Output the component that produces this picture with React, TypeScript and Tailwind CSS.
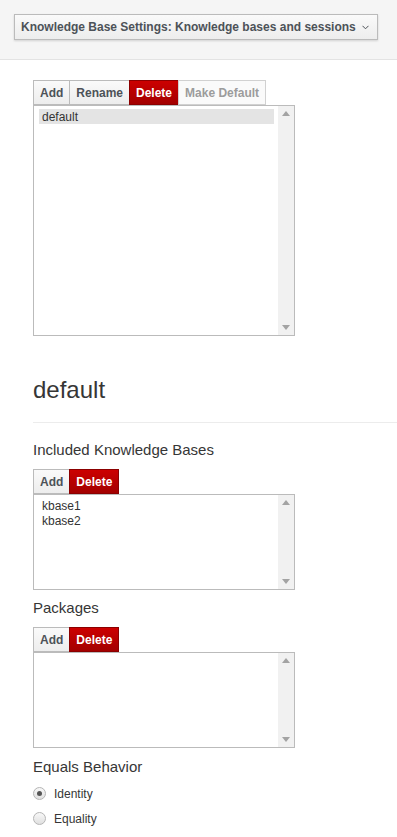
import React from "react";

const font = { fontFamily: '"Liberation Sans", Arial, sans-serif' };

const BtnGroup = ({ items }: { items: { label: string; kind?: "danger" | "disabled" }[] }) => (
  <div className="flex h-[25px]">
    {items.map((it, i) => {
      let cls = "bg-gradient-to-b from-[#fafafa] to-[#ededed] border-[#bbbbbb] text-[#4d5258]";
      if (it.kind === "danger") cls = "bg-gradient-to-b from-[#cc0000] to-[#a30000] border-[#8b0000] text-white";
      if (it.kind === "disabled") cls = "bg-[#fafafa] border-[#d1d1d1] text-[#9c9c9c]";
      return (
        <div
          key={it.label}
          className={`flex items-center px-[6px] border text-[12px] font-bold ${cls} ${i > 0 ? "-ml-px" : ""}`}
        >
          {it.label}
        </div>
      );
    })}
  </div>
);

const Triangle = ({ up }: { up?: boolean }) => (
  <svg width="8" height="5" viewBox="0 0 8 5">
    <path d={up ? "M0 5 L4 0 L8 5 Z" : "M0 0 L4 5 L8 0 Z"} fill="#a3a3a3" />
  </svg>
);

const ListBox = ({ h, items, selected }: { h: string; items: string[]; selected?: string }) => (
  <div className={`flex w-[262px] ${h} border border-[#bbbbbb] bg-white`}>
    <div className="flex-1 flex flex-col pt-[3px] pl-[5px] pr-[4px] text-[12px] text-[#333] leading-[14px]">
      {items.map((it) => (
        <div key={it} className={`px-[3px] h-[15px] flex items-center ${it === selected ? "bg-[#e4e4e4]" : ""}`}>
          {it}
        </div>
      ))}
    </div>
    <div className="w-[16px] bg-[#f1f1f1] flex flex-col items-center justify-between py-[5px]">
      <Triangle up />
      <Triangle />
    </div>
  </div>
);

const Radio = ({ label, checked }: { label: string; checked?: boolean }) => (
  <div className="flex items-center h-[25px] gap-[8px]">
    <div className="w-[13px] h-[13px] rounded-full border border-[#b5b5b5] bg-gradient-to-b from-[#f8f8f8] to-[#e0e0e0] flex items-center justify-center">
      {checked && <div className="w-[5px] h-[5px] rounded-full bg-[#555]" />}
    </div>
    <span className="text-[12px] text-[#363636]">{label}</span>
  </div>
);

export default function App() {
  return (
    <div style={font} className="w-[397px] min-h-[837px] bg-white text-[#363636]">
      <div className="h-[60px] bg-[#f5f5f5] border-b border-[#e3e3e3] pt-[14px] px-[14px]">
        <div className="inline-flex items-center h-[26px] pl-[6px] pr-[8px] whitespace-nowrap border border-[#bbbbbb] bg-gradient-to-b from-[#fafafa] to-[#ededed] shadow-[0_1px_2px_rgba(0,0,0,0.15)] text-[12px] font-bold text-[#4d5258]">
          <span>Knowledge Base Settings: Knowledge bases and sessions</span>
          <svg className="ml-[6px]" width="7" height="5" viewBox="0 0 7 5">
            <path d="M0.5 0.8 L3.5 3.8 L6.5 0.8" stroke="#4d5258" strokeWidth="1" fill="none" />
          </svg>
        </div>
      </div>

      <div className="pl-[33px]">
        <div className="mt-[20px]">
          <BtnGroup items={[{ label: "Add" }, { label: "Rename" }, { label: "Delete", kind: "danger" }, { label: "Make Default", kind: "disabled" }]} />
        </div>
        <ListBox h="h-[231px]" items={["default"]} selected="default" />

        <h1 className="mt-[40px] h-[28px] leading-[28px] text-[24px] text-[#363636]">default</h1>
        <div className="mt-[18px] border-t border-[#ececec]" />

        <h3 className="mt-[17px] h-[20px] leading-[20px] text-[15px]">Included Knowledge Bases</h3>
        <div className="mt-[9px]">
          <BtnGroup items={[{ label: "Add" }, { label: "Delete", kind: "danger" }]} />
        </div>
        <ListBox h="h-[96px]" items={["kbase1", "kbase2"]} />

        <h3 className="mt-[8px] h-[20px] leading-[20px] text-[15px]">Packages</h3>
        <div className="mt-[9px]">
          <BtnGroup items={[{ label: "Add" }, { label: "Delete", kind: "danger" }]} />
        </div>
        <ListBox h="h-[96px]" items={[]} />

        <h3 className="mt-[9px] h-[20px] leading-[20px] text-[15px]">Equals Behavior</h3>
        <div className="mt-[4px]">
          <Radio label="Identity" checked />
          <Radio label="Equality" />
        </div>
      </div>
    </div>
  );
}
